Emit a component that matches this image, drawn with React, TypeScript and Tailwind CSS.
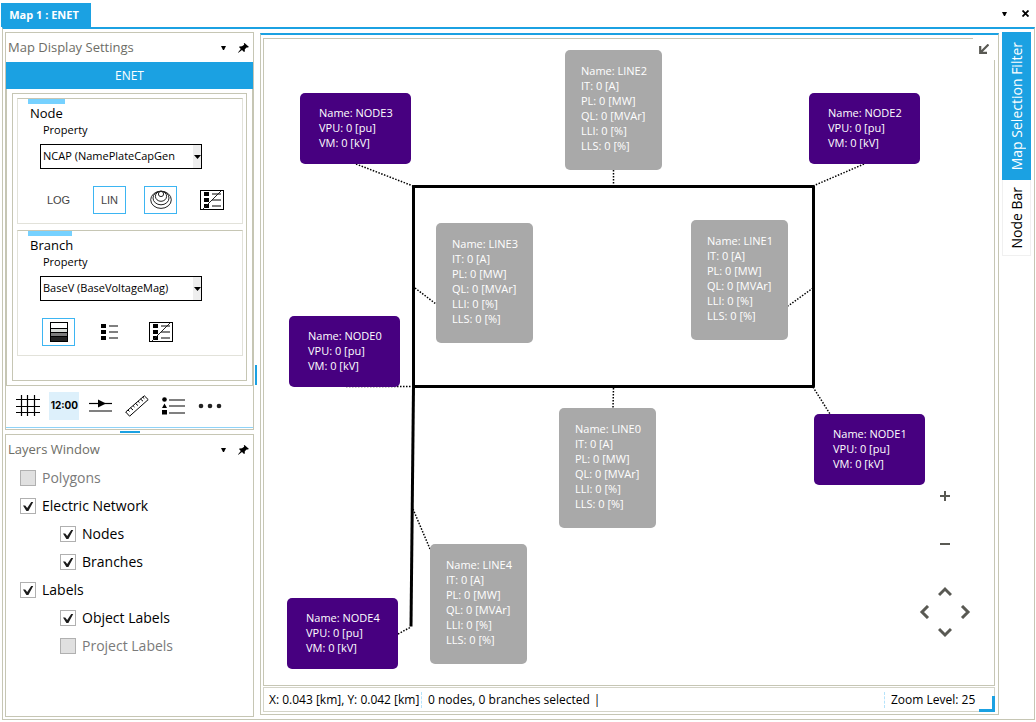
import React from "react";
import clsx from "clsx";

type Callout = { name: string; kind: "node" | "line"; x: number; y: number };

// Positions are in map canvas pixels
const CALLOUTS: Callout[] = [
  { name: "NODE3", kind: "node", x: 36, y: 54 },
  { name: "NODE2", kind: "node", x: 545, y: 54 },
  { name: "NODE0", kind: "node", x: 25, y: 277 },
  { name: "NODE1", kind: "node", x: 550, y: 375 },
  { name: "NODE4", kind: "node", x: 23, y: 559 },
  { name: "LINE2", kind: "line", x: 301, y: 11 },
  { name: "LINE3", kind: "line", x: 172, y: 184 },
  { name: "LINE1", kind: "line", x: 427, y: 181 },
  { name: "LINE0", kind: "line", x: 295, y: 369 },
  { name: "LINE4", kind: "line", x: 166, y: 505 },
];

const NODE_VALUES = ["VPU: 0 [pu]", "VM: 0 [kV]"];
const LINE_VALUES = ["IT: 0 [A]", "PL: 0 [MW]", "QL: 0 [MVAr]", "LLI: 0 [%]", "LLS: 0 [%]"];

const LEADERS = [
  "M92 125L149 147",
  "M349.5 131V146",
  "M600 125L549 147",
  "M151 249L172 265",
  "M549 249L524 267",
  "M82 347.5H149",
  "M349.5 349L349 369",
  "M549 348L566 375",
  "M149 470L166 510",
  "M134 595L147 588",
];

const LAYERS = [
  { label: "Polygons", depth: 0, checked: false },
  { label: "Electric Network", depth: 0, checked: true },
  { label: "Nodes", depth: 1, checked: true },
  { label: "Branches", depth: 1, checked: true },
  { label: "Labels", depth: 0, checked: true },
  { label: "Object Labels", depth: 1, checked: true },
  { label: "Project Labels", depth: 1, checked: false },
];

const CaretIcon = () => (
  <svg width="5" height="4" viewBox="0 0 5 4">
    <path d="M0 0H5L3 4H2Z" fill="#000" />
  </svg>
);

const PinIcon = () => (
  <svg width="11" height="10" viewBox="0 0 11 10">
    <path d="M6.5 0L11 4L9.6 4.6L8.6 4.4L6.8 6.2L6.8 8.6L6 9L4 7L0.4 9.8L0 9.4L2.8 5.9L1 4L1.6 3.4L4 3.2L6.2 1.8L5.8 0.6Z" fill="#000" />
  </svg>
);

const ListIcon = () => (
  <svg width="18" height="16" viewBox="0 0 18 16">
    <path d="M0 0H5V4H0ZM0 6H5V10H0ZM0 12H5V16H0Z" fill="#000" />
    <path d="M8 2H17M8 8H17M8 14H17" stroke="#808080" strokeWidth="2" />
  </svg>
);

const NoListIcon = () => (
  <svg width="24" height="20" viewBox="0 0 24 20">
    <rect x="0.5" y="0.5" width="23" height="19" fill="#fff" stroke="#000" />
    <path d="M4 2H9V6H4ZM4 8H9V12H4ZM4 14H9V18H4Z" fill="#000" />
    <path d="M12 4H21M12 10H21M12 16H21" stroke="#808080" strokeWidth="2" />
    <path d="M3 19L21 1" stroke="#222" />
  </svg>
);

const RingsIcon = () => (
  <svg width="22" height="20" viewBox="0 0 22 20" fill="none" stroke="#222">
    <ellipse cx="11" cy="9.8" rx="10.3" ry="8.6" />
    <ellipse cx="11" cy="8" rx="8" ry="6.8" />
    <ellipse cx="11" cy="6.3" rx="5.6" ry="5" />
    <circle cx="11" cy="4" r="2.6" />
  </svg>
);

const ShadesIcon = () => (
  <svg width="18" height="20" viewBox="0 0 18 20">
    <rect width="18" height="20" fill="#000" />
    <rect x="1" y="1" width="16" height="5" fill="#fff" />
    <rect x="1" y="7" width="16" height="3" fill="#d8dcd8" />
    <rect x="1" y="11" width="16" height="3" fill="#7c7c7c" />
    <rect x="1" y="15" width="16" height="4" fill="#222" />
  </svg>
);

const GridIcon = () => (
  <svg width="24" height="22" viewBox="0 0 24 22">
    <path d="M5.5 0V21M11.5 0V21M18.5 0V21M0 4.5H24M0 11.5H24M0 17.5H24" stroke="#000" strokeWidth="1.2" />
  </svg>
);

const FlowIcon = () => (
  <svg width="24" height="14" viewBox="0 0 24 14">
    <path d="M0 4.5H23" stroke="#000" strokeWidth="1.2" />
    <path d="M9 0.5L17 4.5L9 8.5Z" fill="#000" />
    <path d="M0 12H23" stroke="#808080" strokeWidth="2" />
  </svg>
);

const RulerIcon = () => (
  <svg width="24" height="22" viewBox="0 0 24 22" fill="none" stroke="#000">
    <path d="M0.7 17L19.3 0.8L23.2 4.6L4.6 21.2Z" />
    <path d="M3 15L4.5 16.5M5.5 12.8L8 15M8 10.6L9.5 12M10.5 8.4L13 10.6M13 6.2L14.5 7.6M15.5 4L18 6.2M17.8 2.2L19.3 3.6" />
  </svg>
);

const LegendIcon = () => (
  <svg width="24" height="18" viewBox="0 0 24 18">
    <circle cx="2.5" cy="2.5" r="2.3" fill="#000" />
    <path d="M2.5 6.5L5 11H0ZM0 13H5V17.5H0Z" fill="#000" />
    <path d="M7 3H23M7 9H23M7 16H23" stroke="#808080" strokeWidth="2" />
  </svg>
);

const DotsIcon = () => (
  <svg width="24" height="6" viewBox="0 0 24 6" fill="#222">
    <circle cx="3" cy="3" r="2.3" />
    <circle cx="12" cy="3" r="2.3" />
    <circle cx="21" cy="3" r="2.3" />
  </svg>
);

const Chevron: React.FC<{ d: string }> = ({ d }) => (
  <svg width="14" height="14" viewBox="0 0 14 14" fill="none" stroke="#595953" strokeWidth="3">
    <path d={d} />
  </svg>
);

const PanelHeader: React.FC<{ title: string }> = ({ title }) => (
  <div className="flex h-[29px] shrink-0 items-center justify-between pr-0.5 pl-0.5">
    <h2 className="text-[13px] text-[#6d6d66]">{title}</h2>
    <div className="flex items-center gap-1">
      <button className="flex size-4 items-center justify-center" aria-label={`${title} menu`}>
        <CaretIcon />
      </button>
      <button className="flex size-4 items-center justify-center" aria-label={`Pin ${title}`}>
        <PinIcon />
      </button>
    </div>
  </div>
);

const IconButton: React.FC<{ label: string; active?: boolean; children: React.ReactNode }> = ({
  label,
  active,
  children,
}) => (
  <button
    aria-label={label}
    aria-pressed={!!active}
    className={clsx(
      "flex h-7 w-[33px] items-center justify-center border font-['Liberation_Sans',sans-serif] text-[11px] text-[#444]",
      active ? "border-[#3db5f2]" : "border-transparent"
    )}
  >
    {children}
  </button>
);

const ToolButton: React.FC<{ label: string; active?: boolean; children: React.ReactNode }> = ({
  label,
  active,
  children,
}) => (
  <button
    aria-label={label}
    className={clsx(
      "flex h-7 w-[30px] items-center justify-center font-['Inter',sans-serif] text-[10px] font-bold",
      active && "bg-[#ddf0fb]"
    )}
  >
    {children}
  </button>
);

const PropertyGroup: React.FC<{
  title: string;
  value: string;
  accent: string;
  children: React.ReactNode;
}> = ({ title, value, accent, children }) => {
  const id = `${title.toLowerCase()}-property`;
  return (
    <section className="h-[126px] border border-[#e2e2da] border-t-[#c6c6b4] pl-[10px]">
      <div className={clsx("h-[5px] bg-[#76d1ff]", accent)} />
      <h3 className="pl-0.5 text-[13px] leading-[19px]">{title}</h3>
      <label htmlFor={id} className="block pl-[15px] text-[11px] leading-[14px]">
        Property
      </label>
      <div className="relative mt-[7px] ml-3 h-[25px] w-[162px]">
        <select
          id={id}
          className="block h-full w-full appearance-none border border-black bg-white pl-0.5 text-[11px] text-black"
        >
          <option>{value}</option>
        </select>
        <span className="pointer-events-none absolute inset-y-px right-px flex w-2 items-center justify-center bg-[#eee]">
          <svg width="7" height="4" viewBox="0 0 7 4">
            <path d="M0 0H7L3.5 4Z" fill="#000" />
          </svg>
        </span>
      </div>
      <div className="mt-[17px] flex gap-[18px] pl-[14px]">{children}</div>
    </section>
  );
};

const DisplaySettings = () => (
  <section className="shrink-0 border border-[#c6c6b4] pb-px">
    <PanelHeader title="Map Display Settings" />
    <button className="block h-[27px] w-full bg-[#1ba1e2] text-xs text-white">ENET</button>
    <div className="border-x border-b border-[#c6c6b4] px-[5px] py-1">
      <div className="flex flex-col gap-1.5 border border-[#c6c6b4] pt-1 pr-[3px] pb-6 pl-1">
        <PropertyGroup title="Node" value="NCAP (NamePlateCapGen" accent="w-[37px]">
          <IconButton label="Logarithmic">LOG</IconButton>
          <IconButton label="Linear" active>
            LIN
          </IconButton>
          <IconButton label="Rings" active>
            <RingsIcon />
          </IconButton>
          <IconButton label="Hide node legend">
            <NoListIcon />
          </IconButton>
        </PropertyGroup>
        <PropertyGroup title="Branch" value="BaseV (BaseVoltageMag)" accent="w-11">
          <IconButton label="Shades" active>
            <ShadesIcon />
          </IconButton>
          <IconButton label="List">
            <ListIcon />
          </IconButton>
          <IconButton label="Hide branch legend">
            <NoListIcon />
          </IconButton>
        </PropertyGroup>
      </div>
    </div>
    <div className="flex h-[42px] items-center justify-between border-b border-[#8fd3f8] pr-7 pb-0.5 pl-[7px]">
      <ToolButton label="Grid">
        <GridIcon />
      </ToolButton>
      <ToolButton label="Clock" active>
        12:00
      </ToolButton>
      <ToolButton label="Flow direction">
        <FlowIcon />
      </ToolButton>
      <ToolButton label="Measure">
        <RulerIcon />
      </ToolButton>
      <ToolButton label="Legend">
        <LegendIcon />
      </ToolButton>
      <ToolButton label="More">
        <DotsIcon />
      </ToolButton>
    </div>
  </section>
);

const LayersPanel = () => (
  <section className="min-h-0 flex-1 border border-[#c6c6b4]">
    <PanelHeader title="Layers Window" />
    <ul>
      {LAYERS.map((l) => (
        <li key={l.label} className={clsx("flex h-7 items-center", l.depth ? "pl-[54px]" : "pl-[14px]")}>
          <label className={clsx("flex items-center gap-1.5 text-sm", !l.checked && "text-[#7a7a7a]")}>
            <span className="relative size-4">
              <input
                type="checkbox"
                defaultChecked={l.checked}
                disabled={!l.checked}
                className="block size-4 appearance-none border border-[#b0b0b0] bg-white disabled:bg-[#e0e0e0]"
              />
              {l.checked && (
                <svg className="pointer-events-none absolute inset-0" width="16" height="16" viewBox="0 0 16 16">
                  <path d="M3 7.5H5.2L7.2 10L11.2 4H13.2L8.4 13H6.4Z" fill="#1c1c1c" />
                </svg>
              )}
            </span>
            {l.label}
          </label>
        </li>
      ))}
    </ul>
  </section>
);

const CalloutBox: React.FC<{ item: Callout }> = ({ item }) => {
  const node = item.kind === "node";
  return (
    <div
      className={clsx(
        "absolute rounded-[5px] text-[11px] leading-[15px] whitespace-nowrap text-white",
        node ? "h-[71px] w-[111px] bg-[#470080] pt-3 pl-[19px]" : "h-[120px] w-[97px] bg-[#a9a9a9] pt-[13px] pl-4"
      )}
      style={{ left: item.x, top: item.y }}
    >
      <p>Name: {item.name}</p>
      {(node ? NODE_VALUES : LINE_VALUES).map((v) => (
        <p key={v}>{v}</p>
      ))}
    </div>
  );
};

const MapCanvas = () => (
  <div className="relative min-h-0 flex-1 border border-[#c6c6b4]">
    <svg className="absolute top-0 left-0" width="730" height="646" viewBox="0 0 730 646" fill="none" stroke="#000">
      <path d="M149.5 147.5H549.5V347.5H149.5Z" strokeWidth="3" strokeLinejoin="round" />
      <path d="M149.5 347.5L147 587.5" strokeWidth="3" />
      {LEADERS.map((d) => (
        <path key={d} d={d} strokeWidth="1.5" strokeDasharray="1.5 1.5" />
      ))}
    </svg>
    {CALLOUTS.map((c) => (
      <CalloutBox key={c.name} item={c} />
    ))}
    <button
      aria-label="Collapse"
      className="absolute -top-px -right-px flex h-[22px] w-[22px] items-center justify-center bg-white"
    >
      <svg width="10" height="10" viewBox="0 0 10 10" fill="none" stroke="#595953" strokeWidth="2.2">
        <path d="M9.5 0.5L2 8M1.2 2V8.8H8" />
      </svg>
    </button>
    <div className="absolute right-[19px] bottom-[43px] flex w-[60px] flex-col items-center">
      <button aria-label="Zoom in" className="flex h-12 w-5 items-center justify-center">
        <svg width="10" height="10" viewBox="0 0 10 10" stroke="#595953" strokeWidth="2">
          <path d="M0 5H10M5 0V10" />
        </svg>
      </button>
      <button aria-label="Zoom out" className="flex h-12 w-5 items-center justify-center">
        <svg width="10" height="10" viewBox="0 0 10 10" stroke="#595953" strokeWidth="2">
          <path d="M0 5H10" />
        </svg>
      </button>
      <div className="mt-[14px] flex w-full flex-col items-center">
        <button aria-label="Pan up" className="flex size-5 items-center justify-center">
          <Chevron d="M1 10L7 4L13 10" />
        </button>
        <div className="flex w-full justify-between">
          <button aria-label="Pan left" className="flex size-5 items-center justify-center">
            <Chevron d="M10 1L4 7L10 13" />
          </button>
          <button aria-label="Pan right" className="flex size-5 items-center justify-center">
            <Chevron d="M4 1L10 7L4 13" />
          </button>
        </div>
        <button aria-label="Pan down" className="flex size-5 items-center justify-center">
          <Chevron d="M1 4L7 10L13 4" />
        </button>
      </div>
    </div>
  </div>
);

const StatusBar = () => (
  <footer className="relative mt-px flex h-[25px] shrink-0 items-center border border-[#d4d4c8] pl-[5px] text-xs whitespace-nowrap">
    <span className="w-[152px]">X: 0.043 [km], Y: 0.042 [km]</span>
    <span className="mr-1.5 h-4 border-l border-dashed border-[#b5e3fb]" />
    <span>0 nodes, 0 branches selected</span>
    <span className="ml-1">|</span>
    <span className="mr-1.5 ml-auto h-4 border-l border-dashed border-[#b5e3fb]" />
    <span className="w-[103px]">Zoom Level: 25</span>
    <span className="absolute -right-px -bottom-px size-4 border-r-[3px] border-b-[3px] border-[#1ba1e2]" />
  </footer>
);

const SideTabs = () => (
  <nav className="ml-[3px] flex w-[29px] shrink-0 flex-col text-sm">
    <button className="flex h-[148px] items-center justify-center bg-[#1ba1e2] text-white">
      <span className="rotate-180 whitespace-nowrap [writing-mode:vertical-rl]">Map Selection Filter</span>
    </button>
    <button className="flex h-[76px] items-center justify-center border border-t-0 border-[#f0f0f0]">
      <span className="rotate-180 whitespace-nowrap [writing-mode:vertical-rl]">Node Bar</span>
    </button>
  </nav>
);

const App: React.FC = () => (
  <div className="flex h-screen min-h-[640px] flex-col bg-white pb-0.5 font-['Open_Sans','Noto_Sans',sans-serif] text-black">
    <header className="flex h-[27px] shrink-0 items-end justify-between pl-px">
      <button className="h-6 w-[90px] bg-[#1ba1e2] pr-1 text-[11px] font-bold text-white">Map 1 : ENET</button>
      <div className="flex h-full items-center gap-[5px] pr-[3px]">
        <button aria-label="Window list" className="flex size-4 items-center justify-center">
          <CaretIcon />
        </button>
        <button aria-label="Close" className="flex size-4 items-center justify-center">
          <svg width="7" height="7" viewBox="0 0 7 7" stroke="#000" strokeWidth="1.8">
            <path d="M0.5 0.5L6.5 6.5M6.5 0.5L0.5 6.5" />
          </svg>
        </button>
      </div>
    </header>
    <main className="mr-px ml-0.5 flex min-h-0 flex-1 border border-t-2 border-[#c6c6b4] border-t-[#1ba1e2] pt-[3px] pr-[3px] pb-0.5 pl-0.5">
      <aside className="flex w-[249px] shrink-0 flex-col">
        <DisplaySettings />
        <div className="flex h-1 shrink-0 items-center justify-center">
          <span className="h-0.5 w-5 bg-[#1ba1e2]" />
        </div>
        <LayersPanel />
      </aside>
      <div className="flex w-1.5 shrink-0 items-center pl-px">
        <span className="h-5 w-0.5 bg-[#1ba1e2]" />
      </div>
      <section className="mt-px mb-0.5 flex min-w-0 flex-1 flex-col border border-t-2 border-[#c6c6b4] border-t-[#1ba1e2] pt-[3px] pr-[3px] pb-0.5 pl-0.5">
        <MapCanvas />
        <StatusBar />
      </section>
      <SideTabs />
    </main>
  </div>
);

export default App;
